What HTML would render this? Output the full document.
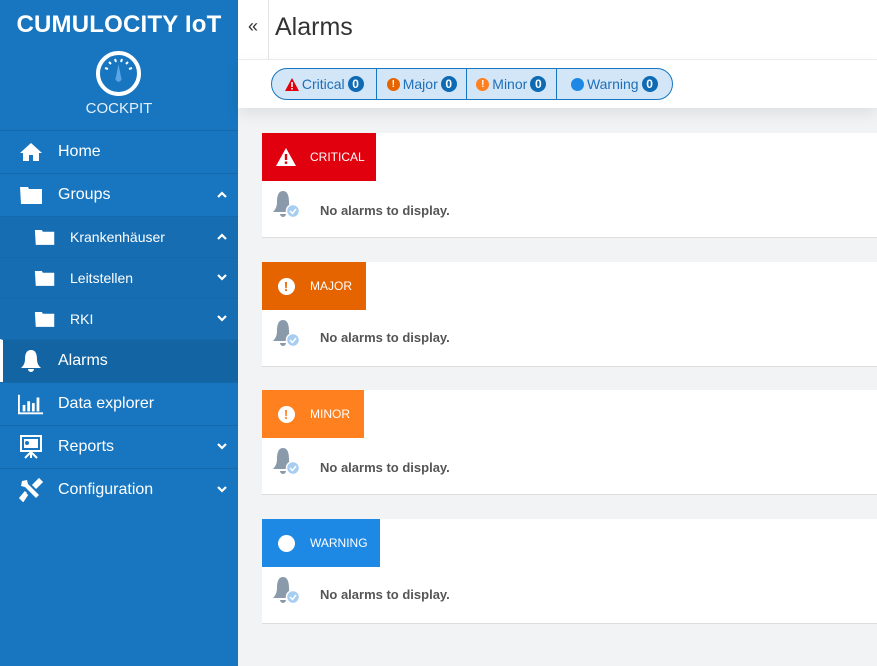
<!DOCTYPE html>
<html><head><meta charset="utf-8"><style>
*{box-sizing:border-box;margin:0;padding:0}
body{width:877px;height:666px;overflow:hidden;font-family:"Liberation Sans",sans-serif;background:#f2f3f4;position:relative}
.sb{position:absolute;left:0;top:0;width:238px;height:666px;background:#1776bf;color:#fff}
.logo{position:absolute;top:11px;left:0;width:238px;text-align:center;font-weight:bold;font-size:24px;letter-spacing:.2px}
.ck{position:absolute;top:100px;width:238px;text-align:center;font-size:15px;color:#e6f0fa}
.it{position:absolute;left:0;width:238px;height:43px;border-top:1px solid #1469ab;display:flex;align-items:center;font-size:16px}
.it .ic{position:absolute;left:18px;width:26px;height:26px;display:flex;align-items:center;justify-content:center}
.it .t{position:absolute;left:58px}
.it .ch{position:absolute;right:11px;top:50%;margin-top:-4px}
.sub{height:41px;background:#166db2;font-size:14px}
.sub .ic{left:32px}.sub .t{left:70px}
.act{background:#1364a3;border-left:3px solid #fff}
.main{position:absolute;left:238px;top:0;right:0}
.hd{height:60px;background:#fff;border-bottom:1px solid #eee;position:relative}
.hd .c{position:absolute;left:0;top:0;width:31px;height:60px;border-right:1px solid #e4e4e4;text-align:center;line-height:52px;font-size:18px;color:#333}
.hd h1{position:absolute;left:37px;top:13px;font-weight:normal;font-size:25px;color:#333}
.fb{height:48px;background:#fff;position:relative;box-shadow:0 6px 14px rgba(0,0,0,.08)}
.pill{position:absolute;left:33px;top:8px;width:402px;height:32px;border:1px solid #1776bf;border-radius:16px;background:#d2e6f8;display:flex;font-size:14px;color:#1e6fb8;overflow:hidden}
.pill div{display:flex;align-items:center;justify-content:center;border-right:1px solid #1776bf;gap:3px}
.pill div:last-child{border:none}
.n{display:inline-block;width:16px;height:16px;border-radius:8px;background:#0f6ab4;color:#fff;font-size:12px;font-weight:bold;text-align:center;line-height:16px}
.dot{display:inline-block;width:13px;height:13px;border-radius:7px;color:#fff;font-size:10px;font-weight:bold;text-align:center;line-height:13px}
.card{position:absolute;left:262px;width:615px;height:105px;background:#fff;border-bottom:1px solid #ddd}
.bd{position:absolute;left:0;top:0;height:48px;color:#fff;font-size:12px;display:flex;align-items:center}
.bd .i{width:48px;display:flex;justify-content:center}
.na{position:absolute;left:58px;top:70px;font-size:13px;font-weight:bold;color:#555}
.bell{position:absolute;left:10px;top:56px}
</style></head><body>
<div class="sb">
<div class="logo">CUMULOCITY IoT</div>
<svg style="position:absolute;left:95px;top:50px" width="47" height="47" viewBox="0 0 47 47"><circle cx="23.5" cy="23.5" r="20.5" fill="none" stroke="#fff" stroke-width="4"/><g stroke="#fff" stroke-width="2"><line x1="10" y1="18" x2="13" y2="19"/><line x1="14" y1="12" x2="16" y2="14"/><line x1="20" y1="9" x2="21" y2="12"/><line x1="27" y1="9" x2="26" y2="12"/><line x1="33" y1="12" x2="31" y2="14"/><line x1="37" y1="18" x2="34" y2="19"/></g><path d="M23.5 14 L26 27 A3 3 0 1 1 21 27 Z" fill="#5aa6e6"/></svg>
<div class="ck">COCKPIT</div>
<div class="it" style="top:130px"><div class="ic"><svg width="24" height="20" viewBox="0 0 24 20"><path d="M12 1 L23 11 L20 11 L20 19 L14 19 L14 13 L10 13 L10 19 L4 19 L4 11 L1 11 Z" fill="#fff"/></svg></div><span class="t">Home</span></div>
<div class="it" style="top:173px"><div class="ic"><svg width="25" height="20" viewBox="0 0 25 20"><path d="M1 2 H9 L10 4 H23 V19 H2 Z" fill="#fff"/></svg></div><span class="t">Groups</span><svg class="ch" width="10" height="7" viewBox="0 0 10 7"><path d="M1 6 L5 2 L9 6" stroke="#fff" stroke-width="2.2" fill="none"/></svg></div>
<div class="it sub" style="top:216px"><div class="ic"><svg width="22" height="18" viewBox="0 0 25 20"><path d="M1 2 H9 L10 4 H23 V19 H2 Z" fill="#fff"/></svg></div><span class="t">Krankenhäuser</span><svg class="ch" width="10" height="7" viewBox="0 0 10 7"><path d="M1 6 L5 2 L9 6" stroke="#fff" stroke-width="2.2" fill="none"/></svg></div>
<div class="it sub" style="top:257px"><div class="ic"><svg width="22" height="18" viewBox="0 0 25 20"><path d="M1 2 H9 L10 4 H23 V19 H2 Z" fill="#fff"/></svg></div><span class="t">Leitstellen</span><svg class="ch" width="10" height="7" viewBox="0 0 10 7"><path d="M1 1 L5 5 L9 1" stroke="#fff" stroke-width="2.2" fill="none"/></svg></div>
<div class="it sub" style="top:298px"><div class="ic"><svg width="22" height="18" viewBox="0 0 25 20"><path d="M1 2 H9 L10 4 H23 V19 H2 Z" fill="#fff"/></svg></div><span class="t">RKI</span><svg class="ch" width="10" height="7" viewBox="0 0 10 7"><path d="M1 1 L5 5 L9 1" stroke="#fff" stroke-width="2.2" fill="none"/></svg></div>
<div class="it act" style="top:339px"><div class="ic" style="left:15px"><svg width="22" height="24" viewBox="0 0 22 24"><path d="M11 1 C6 1 5 6 5 10 C5 15 3 17 1 19 H21 C19 17 17 15 17 10 C17 6 16 1 11 1 Z M8 20 A3 3 0 0 0 14 20 Z" fill="#fff"/></svg></div><span class="t" style="left:55px">Alarms</span></div>
<div class="it" style="top:382px"><div class="ic"><svg width="28" height="22" viewBox="0 0 28 22"><path d="M1 1 V21 H27" stroke="#fff" stroke-width="2" fill="none"/><rect x="5" y="12" width="3" height="7" fill="#fff"/><rect x="10" y="8" width="3" height="11" fill="#fff"/><rect x="15" y="10" width="3" height="9" fill="#fff"/><rect x="20" y="4" width="3" height="15" fill="#fff"/></svg></div><span class="t">Data explorer</span></div>
<div class="it" style="top:425px"><div class="ic"><svg width="24" height="24" viewBox="0 0 24 24"><rect x="2" y="1" width="20" height="15" fill="none" stroke="#fff" stroke-width="2"/><rect x="5" y="4" width="14" height="9" fill="#fff"/><circle cx="8" cy="8" r="2" fill="#1776bf"/><path d="M12 17 V23 M12 17 L6 23 M12 17 L18 23" stroke="#fff" stroke-width="2"/></svg></div><span class="t">Reports</span><svg class="ch" width="10" height="7" viewBox="0 0 10 7"><path d="M1 1 L5 5 L9 1" stroke="#fff" stroke-width="2.2" fill="none"/></svg></div>
<div class="it" style="top:468px"><div class="ic"><svg width="24" height="24" viewBox="0 0 24 24"><path d="M3 3 L8 2 L9 6 L20 17 L17 20 L6 9 L2 8 Z" fill="#fff"/><path d="M14 8 L20 2 L22 4 L16 10 M8 16 L4 22 L2 20 L7 14" stroke="#fff" stroke-width="3"/></svg></div><span class="t">Configuration</span><svg class="ch" width="10" height="7" viewBox="0 0 10 7"><path d="M1 1 L5 5 L9 1" stroke="#fff" stroke-width="2.2" fill="none"/></svg></div>
</div>
<div class="main">
<div class="hd"><div class="c">«</div><h1>Alarms</h1></div>
<div class="fb"><div class="pill">
<div style="width:106px"><svg width="14" height="13" viewBox="0 0 14 13"><path d="M7 0 L14 13 H0 Z" fill="#e0000e"/><rect x="6.2" y="4" width="1.6" height="5" fill="#fff"/><rect x="6.2" y="10" width="1.6" height="1.6" fill="#fff"/></svg> Critical <span class="n">0</span></div>
<div style="width:90px"><span class="dot" style="background:#e66400">!</span> Major <span class="n">0</span></div>
<div style="width:90px"><span class="dot" style="background:#ff801f">!</span> Minor <span class="n">0</span></div>
<div style="width:116px"><span class="dot" style="background:#1e88e5"></span> Warning <span class="n">0</span></div>
</div></div>
</div>
<div class="card" style="top:133px"><div class="bd" style="width:114px;background:#e0000e"><div class="i"><svg width="20" height="18" viewBox="0 0 20 18"><path d="M10 0 L20 18 H0 Z" fill="#fff"/><rect x="8.8" y="6" width="2.4" height="6" fill="#e0000e"/><rect x="8.8" y="13.5" width="2.4" height="2.4" fill="#e0000e"/></svg></div><span>CRITICAL</span></div>
<svg class="bell" width="28" height="32" viewBox="0 0 28 32"><path d="M11 2 C6 2 5 8 5 13 C5 18 3 21 1 23 H21 C19 21 17 18 17 13 C17 8 16 2 11 2 Z M8 25 A3 3 0 0 0 14 25 Z" fill="#8a9aab"/><circle cx="21" cy="22" r="6.5" fill="#a7cdf0" stroke="#fff" stroke-width="1.5"/><path d="M18 22 L20.5 24.5 L24 20" stroke="#fff" stroke-width="1.5" fill="none"/></svg>
<div class="na">No alarms to display.</div></div>
<div class="card" style="top:262px"><div class="bd" style="width:104px;background:#e66400"><div class="i"><span class="dot" style="background:#fff;color:#e66400;width:17px;height:17px;line-height:17px;font-size:13px;border-radius:9px">!</span></div><span>MAJOR</span></div>
<svg class="bell" width="28" height="32" viewBox="0 0 28 32"><path d="M11 2 C6 2 5 8 5 13 C5 18 3 21 1 23 H21 C19 21 17 18 17 13 C17 8 16 2 11 2 Z M8 25 A3 3 0 0 0 14 25 Z" fill="#8a9aab"/><circle cx="21" cy="22" r="6.5" fill="#a7cdf0" stroke="#fff" stroke-width="1.5"/><path d="M18 22 L20.5 24.5 L24 20" stroke="#fff" stroke-width="1.5" fill="none"/></svg>
<div class="na" style="top:68px">No alarms to display.</div></div>
<div class="card" style="top:390px"><div class="bd" style="width:102px;background:#ff801f"><div class="i"><span class="dot" style="background:#fff;color:#ff801f;width:17px;height:17px;line-height:17px;font-size:13px;border-radius:9px">!</span></div><span>MINOR</span></div>
<svg class="bell" width="28" height="32" viewBox="0 0 28 32"><path d="M11 2 C6 2 5 8 5 13 C5 18 3 21 1 23 H21 C19 21 17 18 17 13 C17 8 16 2 11 2 Z M8 25 A3 3 0 0 0 14 25 Z" fill="#8a9aab"/><circle cx="21" cy="22" r="6.5" fill="#a7cdf0" stroke="#fff" stroke-width="1.5"/><path d="M18 22 L20.5 24.5 L24 20" stroke="#fff" stroke-width="1.5" fill="none"/></svg>
<div class="na">No alarms to display.</div></div>
<div class="card" style="top:519px"><div class="bd" style="width:118px;background:#1e88e5"><div class="i"><span class="dot" style="background:#fff;width:17px;height:17px;border-radius:9px"></span></div><span>WARNING</span></div>
<svg class="bell" width="28" height="32" viewBox="0 0 28 32"><path d="M11 2 C6 2 5 8 5 13 C5 18 3 21 1 23 H21 C19 21 17 18 17 13 C17 8 16 2 11 2 Z M8 25 A3 3 0 0 0 14 25 Z" fill="#8a9aab"/><circle cx="21" cy="22" r="6.5" fill="#a7cdf0" stroke="#fff" stroke-width="1.5"/><path d="M18 22 L20.5 24.5 L24 20" stroke="#fff" stroke-width="1.5" fill="none"/></svg>
<div class="na" style="top:68px">No alarms to display.</div></div>
</body></html>
